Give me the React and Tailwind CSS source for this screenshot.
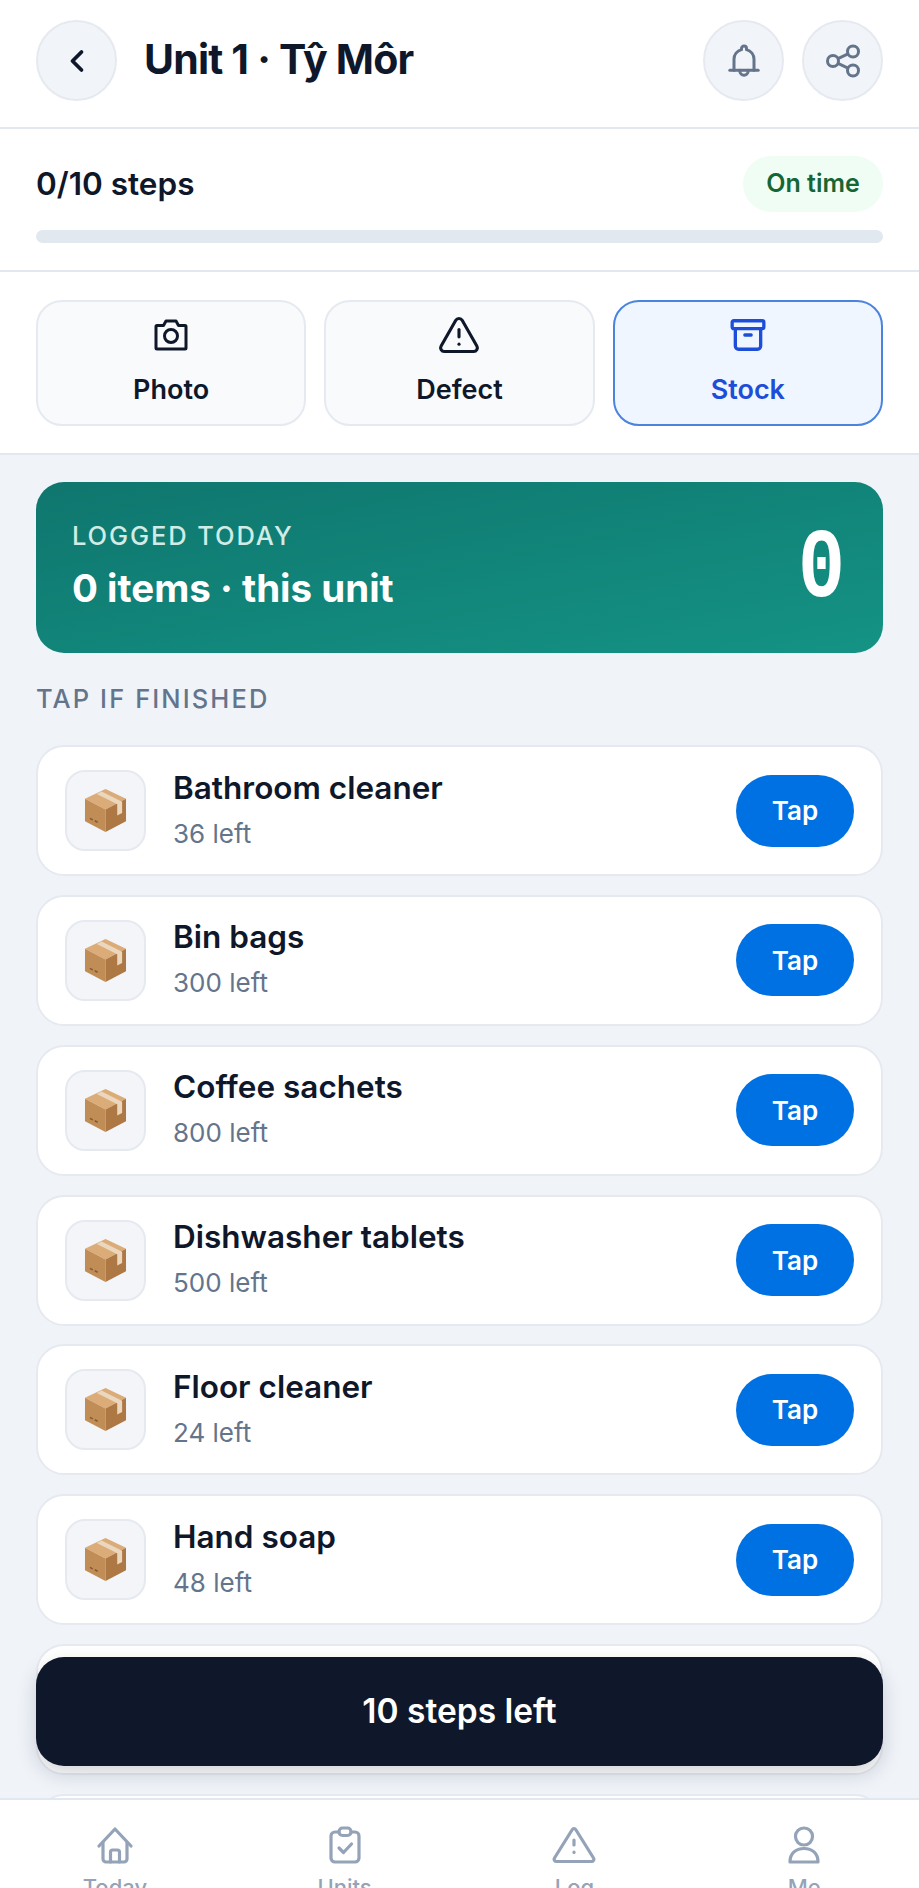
import { Archive, ChevronLeft, TriangleAlert } from 'lucide-react';

const items = [
  { name: 'Bathroom cleaner', left: 36 },
  { name: 'Bin bags', left: 300 },
  { name: 'Coffee sachets', left: 800 },
  { name: 'Dishwasher tablets', left: 500 },
  { name: 'Floor cleaner', left: 24 },
  { name: 'Hand soap', left: 48 },
  { name: 'Laundry liquid', left: 60 },
  { name: 'Toilet rolls', left: 200 },
];

function BoxIcon() {
  return (
    <svg width="43" height="45" viewBox="0 0 44 46">
      <path d="M22 1 L43 11 L22 22 L1 11 Z" fill="#dbab78" />
      <path d="M1 11 L22 22 L22 45 L1 34 Z" fill="#c08d57" />
      <path d="M43 11 L22 22 L22 45 L43 34 Z" fill="#ad7843" />
      <path d="M13 6 L34 16.5 L34 28 L39 25.5 L39 14 L18 3.5 Z" fill="#ead7bd" />
      <path d="M6 31 L9 32.5 M11 33.5 L14 35" stroke="#85592f" strokeWidth="1.5" />
    </svg>
  );
}

function BellIcon() {
  return (
    <svg width="40" height="40" viewBox="0 0 24 24" fill="none" stroke="currentColor" strokeWidth="1.8" strokeLinecap="round" strokeLinejoin="round">
      <path d="M3.5 17.5h17" />
      <path d="M6 17.5V11a6 6 0 0 1 4.5-5.8V4.5a1.5 1.5 0 0 1 3 0v.7A6 6 0 0 1 18 11v6.5" />
      <path d="M9.5 17.5v.5a2.5 2.5 0 0 0 5 0v-.5" />
    </svg>
  );
}

function ShareIcon() {
  return (
    <svg width="40" height="40" viewBox="0 0 40 40" fill="none" stroke="currentColor" strokeWidth="3">
      <circle cx="10" cy="20" r="5.5" />
      <circle cx="30" cy="10.5" r="5.5" />
      <circle cx="30" cy="29.5" r="5.5" />
      <path d="M15 17.6 L25 12.9 M15 22.4 L25 27.1" />
    </svg>
  );
}

function CameraIcon() {
  return (
    <svg width="38" height="38" viewBox="0 0 38 38" fill="none" stroke="currentColor" strokeWidth="3" strokeLinejoin="round">
      <path d="M5 9.5h6.5L14 5h10l2.500 4.500H33a1 1 0 0 1 1 1V32a1 1 0 0 1-1 1H5a1 1 0 0 1-1-1V10.500a1 1 0 0 1 1-1z" />
      <circle cx="19" cy="20" r="6.500" />
    </svg>
  );
}

function HomeIcon() {
  return (
    <svg width="38" height="38" viewBox="0 0 38 38" fill="none" stroke="currentColor" strokeWidth="3.2" strokeLinecap="round" strokeLinejoin="round">
      <path d="M3 20 L19 3 L35 20" />
      <path d="M7 16.500V33a3 3 0 0 0 3 3h18a3 3 0 0 0 3-3V16.500" />
      <path d="M14.500 36V26a2 2 0 0 1 2-2h5a2 2 0 0 1 2 2v10" />
    </svg>
  );
}

function ClipboardIcon() {
  return (
    <svg width="32" height="38" viewBox="0 0 32 38" fill="none" stroke="currentColor" strokeWidth="3.2" strokeLinecap="round" strokeLinejoin="round">
      <path d="M10 6H6a4 4 0 0 0-4 4v22a4 4 0 0 0 4 4h20a4 4 0 0 0 4-4V10a4 4 0 0 0-4-4h-4" />
      <rect x="10" y="2" width="12" height="7.500" rx="3.500" />
      <path d="M10 22 L14.500 26.500 L22.500 18" />
    </svg>
  );
}

function LogIcon() {
  return (
    <svg width="44" height="38" viewBox="0 0 44 38" fill="none" stroke="currentColor" strokeWidth="3.200" strokeLinecap="round" strokeLinejoin="round">
      <path d="M22 2.500 a2 2 0 0 1 1.700 1 L41.500 32a2.300 2.300 0 0 1-2 3.500H4.500a2.300 2.300 0 0 1-2-3.500L20.300 3.500a2 2 0 0 1 1.700-1z" />
      <path d="M22 14v5" />
      <path d="M22 26v.5" />
    </svg>
  );
}

function MeIcon() {
  return (
    <svg width="32" height="38" viewBox="0 0 32 38" fill="none" stroke="currentColor" strokeWidth="3.200" strokeLinejoin="round">
      <circle cx="16" cy="10.500" r="8.500" />
      <path d="M2 36c0-9 6-13.500 14-13.500S30 27 30 36z" />
    </svg>
  );
}

const navItems = [
  { label: 'Today', icon: HomeIcon },
  { label: 'Units', icon: ClipboardIcon },
  { label: 'Log', icon: LogIcon },
  { label: 'Me', icon: MeIcon },
];

function RoundButton({ children }) {
  return (
    <button className="w-[81px] h-[81px] rounded-full bg-[#f1f5f9] border-2 border-[#e6eaf0] flex items-center justify-center shrink-0">
      {children}
    </button>
  );
}

function ActionButton({ label, icon, active }) {
  return (
    <button
      className={
        active
          ? 'flex-1 h-[126px] rounded-[26px] border-2 border-[#4a84dc] bg-[#eff6ff] flex flex-col items-center pt-[11px] text-[#1d4ed8]'
          : 'flex-1 h-[126px] rounded-[26px] border-2 border-[#e6eaf0] bg-[#f8fafc] flex flex-col items-center pt-[11px] text-[#0f172a]'
      }
    >
      <span className="h-[44px] flex items-center justify-center">{icon}</span>
      <span className="mt-[16px] text-[27px] leading-[34px] font-semibold">{label}</span>
    </button>
  );
}

function StockRow({ name, left }) {
  return (
    <div className="h-[131px] shrink-0 bg-white border-2 border-[#e6eaf0] rounded-[28px] pl-[27px] pr-[27px] flex items-center">
      <div className="w-[81px] h-[81px] rounded-[20px] bg-[#f3f5f9] border-2 border-[#e6eaf0] flex items-center justify-center shrink-0">
        <BoxIcon />
      </div>
      <div className="ml-[27px] flex-1 min-w-0 pb-[3px]">
        <div className="text-[31.5px] leading-[40px] font-semibold text-[#0f172a]">{name}</div>
        <div className="mt-[9px] text-[26px] leading-[34px] text-[#64748b]">{left} left</div>
      </div>
      <button className="w-[118px] h-[72px] rounded-full bg-[#0071e3] text-white text-[26px] font-semibold">Tap</button>
    </div>
  );
}

export default function App() {
  return (
    <div className="relative w-[919px] h-[1888px] overflow-hidden flex flex-col bg-[#f0f4f9] font-['Inter',sans-serif]">
      {/* Header */}
      <header className="h-[129px] shrink-0 bg-white border-b-2 border-[#e2e8f0] flex items-start pt-[20px] px-[36px]">
        <RoundButton>
          <ChevronLeft size={36} strokeWidth={2.5} className="text-[#0f172a]" />
        </RoundButton>
        <h1 className="ml-[27px] flex-1 text-[41px] leading-[78px] font-bold tracking-[-0.8px] text-[#0f172a]">Unit 1 · Tŷ Môr</h1>
        <div className="flex gap-[18px] text-[#64748b]">
          <RoundButton>
            <BellIcon />
          </RoundButton>
          <RoundButton>
            <ShareIcon />
          </RoundButton>
        </div>
      </header>

      {/* Progress */}
      <section className="h-[143px] shrink-0 bg-white border-b-2 border-[#e2e8f0] px-[36px] pt-[27px]">
        <div className="flex items-center justify-between">
          <span className="text-[31.5px] leading-[40px] font-semibold text-[#0f172a]">0/10 steps</span>
          <span className="h-[56px] w-[140px] rounded-full bg-[#f0fdf4] flex items-center justify-center text-[25px] font-semibold text-[#166534]">On time</span>
        </div>
        <div className="mt-[18px] h-[13px] rounded-full bg-[#e2e8f0]" />
      </section>

      {/* Actions */}
      <section className="h-[183px] shrink-0 bg-white border-b-2 border-[#e2e8f0] px-[36px] pt-[28px] flex gap-[18px]">
        <ActionButton label="Photo" icon={<CameraIcon />} />
        <ActionButton label="Defect" icon={<TriangleAlert size={44} strokeWidth={1.7} />} />
        <ActionButton label="Stock" icon={<Archive size={38} strokeWidth={2.100} />} active />
      </section>

      {/* Content */}
      <main className="h-[1343px] shrink-0 overflow-hidden px-[36px] pt-[27px]">
        <div className="h-[171px] rounded-[28px] bg-linear-to-br from-[#0f766e] to-[#149384] pl-[36px] pr-[32px] flex items-center justify-between">
          <div className="pb-[5px]">
            <div className="text-[25.5px] leading-[32px] font-medium tracking-[1.9px] text-[#d1ece7]">LOGGED TODAY</div>
            <div className="mt-[13px] text-[38.5px] leading-[46px] font-bold text-white">0 items · this unit</div>
          </div>
          <div className="mt-[4px] font-['Liberation_Mono',monospace] text-[98px] leading-[90px] font-bold text-white scale-x-[0.8]">0</div>
        </div>
        <div className="mt-[30px] text-[25.5px] leading-[32px] font-medium tracking-[2.1px] text-[#64748b]">TAP IF FINISHED</div>
        <div className="mt-[30px] flex flex-col gap-[18.85px]">
          {items.map((item) => (
            <StockRow key={item.name} name={item.name} left={item.left} />
          ))}
        </div>
      </main>

      {/* Sticky step button */}
      <button className="absolute left-[36px] top-[1657px] w-[847px] h-[109px] rounded-[28px] bg-[#0f172a] text-white text-[33.5px] font-semibold shadow-[0_8px_20px_rgba(15,23,42,0.18)]">
        10 steps left
      </button>

      {/* Bottom nav */}
      <nav className="h-[120px] shrink-0 bg-white border-t-2 border-[#e2e8f0] grid grid-cols-4 pt-[26px]">
        {navItems.map(({ label, icon: Icon }) => (
          <div key={label} className="flex flex-col items-center text-[#94a3b8]">
            <Icon />
            <span className="mt-[8px] text-[22px] leading-[30px] font-medium">{label}</span>
          </div>
        ))}
      </nav>
    </div>
  );
}
